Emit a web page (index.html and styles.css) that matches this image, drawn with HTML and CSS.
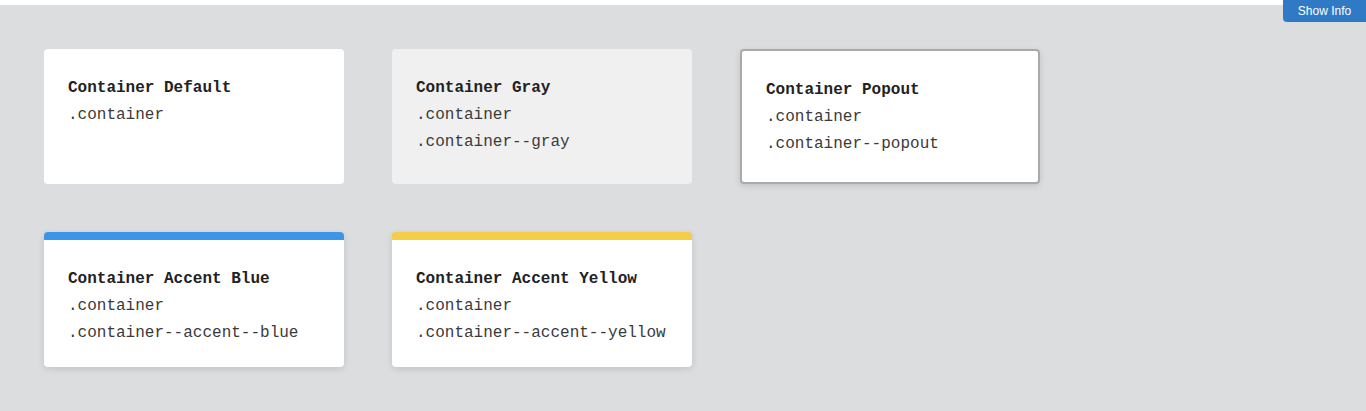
FILE: index.html
```html
<!DOCTYPE html>
<html lang="en">
<head>
<meta charset="utf-8">
<title>Containers</title>
<link rel="stylesheet" href="styles.css">
</head>
<body>
<div class="topbar"></div>
<button class="show-info">Show Info</button>
<main class="grid">
  <div class="container">
    <div class="title">Container Default</div>
    <div class="cls">.container</div>
  </div>
  <div class="container container--gray">
    <div class="title">Container Gray</div>
    <div class="cls">.container</div>
    <div class="cls">.container--gray</div>
  </div>
  <div class="container container--popout">
    <div class="title">Container Popout</div>
    <div class="cls">.container</div>
    <div class="cls">.container--popout</div>
  </div>
  <div class="container container--accent container--accent--blue">
    <div class="title">Container Accent Blue</div>
    <div class="cls">.container</div>
    <div class="cls">.container--accent--blue</div>
  </div>
  <div class="container container--accent container--accent--yellow">
    <div class="title">Container Accent Yellow</div>
    <div class="cls">.container</div>
    <div class="cls">.container--accent--yellow</div>
  </div>
</main>
</body>
</html>
```

FILE: styles.css
```css
html, body {
  margin: 0;
  padding: 0;
}
body {
  background: #dcdddf;
  min-height: 411px;
  font-family: "Liberation Mono", "Courier New", monospace;
  position: relative;
}
.topbar {
  height: 5px;
  background: #ffffff;
}
.show-info {
  position: absolute;
  top: 0;
  right: 0;
  width: 83px;
  height: 22px;
  border: none;
  border-radius: 0 0 0 4px;
  background: #3079c5;
  color: #ffffff;
  font-family: "Liberation Sans", Arial, sans-serif;
  font-size: 12px;
  padding: 0;
  line-height: 22px;
}
.grid {
  display: grid;
  grid-template-columns: repeat(3, 300px);
  grid-auto-rows: 135px;
  gap: 48px;
  padding: 44px;
}
.container {
  box-sizing: border-box;
  background: #ffffff;
  border-radius: 4px;
  padding: 26px 24px 24px;
  font-size: 16px;
  line-height: 27px;
  color: #3a3a3a;
}
.title {
  font-weight: bold;
  color: #222222;
}
.container--gray {
  background: #f0f0f0;
}
.container--popout {
  border: 2px solid #aaaaab;
  box-shadow: 0 2px 6px rgba(0, 0, 0, 0.12);
}
.container--accent {
  box-shadow: 0 2px 6px rgba(0, 0, 0, 0.12);
}
.container--accent--blue {
  border-top: 8px solid #3d95e8;
}
.container--accent--yellow {
  border-top: 8px solid #f4cd49;
}
```
